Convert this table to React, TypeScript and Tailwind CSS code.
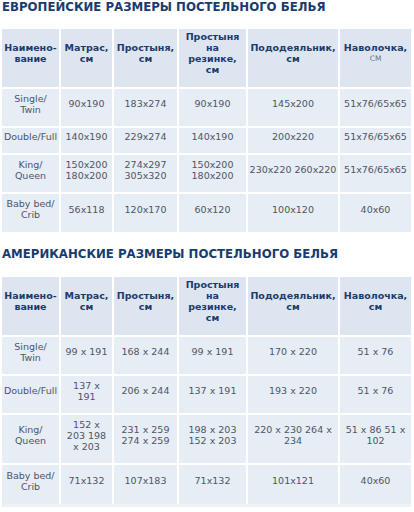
const font = { fontFamily: '"DejaVu Sans", Verdana, sans-serif' };

const headers = [
  ["Наимено-", "вание"],
  ["Матрас,", "см"],
  ["Простыня,", "см"],
  ["Простыня", "на", "резинке,", "см"],
  ["Пододеяльник,", "см"],
];

interface Row {
  h: string;
  cells: string[][];
}

const euRows: Row[] = [
  { h: "h-[37px]", cells: [["Single/", "Twin"], ["90x190"], ["183x274"], ["90x190"], ["145x200"], ["51x76/65x65"]] },
  { h: "h-[25px]", cells: [["Double/Full"], ["140x190"], ["229x274"], ["140x190"], ["200x220"], ["51x76/65x65"]] },
  { h: "h-[37px]", cells: [["King/", "Queen"], ["150x200", "180x200"], ["274x297", "305x320"], ["150x200", "180x200"], ["230x220 260x220"], ["51x76/65x65"]] },
  { h: "h-[38px]", cells: [["Baby bed/", "Crib"], ["56x118"], ["120x170"], ["60x120"], ["100x120"], ["40x60"]] },
];

const usRows: Row[] = [
  { h: "h-[37px]", cells: [["Single/", "Twin"], ["99 x 191"], ["168 x 244"], ["99 x 191"], ["170 x 220"], ["51 x 76"]] },
  { h: "h-[37px]", cells: [["Double/Full"], ["137 x", "191"], ["206 x 244"], ["137 x 191"], ["193 x 220"], ["51 x 76"]] },
  { h: "h-[48px]", cells: [["King/", "Queen"], ["152 x", "203 198", "x 203"], ["231 x 259", "274 x 259"], ["198 x 203", "152 x 203"], ["220 x 230 264 x", "234"], ["51 x 86 51 x", "102"]] },
  { h: "h-[39px]", cells: [["Baby bed/", "Crib"], ["71x132"], ["107x183"], ["71x132"], ["101x121"], ["40x60"]] },
];

function Lines({ lines }: { lines: string[] }) {
  return (
    <div>
      {lines.map((l, i) => (
        <div key={i} className="whitespace-nowrap">{l}</div>
      ))}
    </div>
  );
}

function SizeTable({ rows, smallCm }: { rows: Row[]; smallCm?: boolean }) {
  return (
    <div className="ml-[2px] w-[409px] grid grid-cols-[57px_51px_63px_67px_90px_71px] gap-[2px] text-[9.5px] leading-[11px]">
      {headers.map((h, i) => (
        <div
          key={"h" + i}
          className="h-[58px] bg-[#dce5f0] flex items-center justify-center text-center pb-[10px] font-bold text-[#1c3a6b]"
        >
          <Lines lines={h} />
        </div>
      ))}
      <div className="h-[58px] bg-[#dce5f0] flex items-center justify-center text-center pb-[10px] font-bold text-[#1c3a6b]">
        <div>
          <div>Наволочка,</div>
          {smallCm ? (
            <div className="text-[7.5px] font-normal text-[#6b7588]">СМ</div>
          ) : (
            <div>см</div>
          )}
        </div>
      </div>
      {rows.map((r, ri) =>
        r.cells.map((c, ci) => (
          <div
            key={ri + "-" + ci}
            className={`${r.h} bg-[#e6edf5] flex items-center justify-center text-center pb-[8px] text-[#4d5566]`}
          >
            <Lines lines={c} />
          </div>
        ))
      )}
    </div>
  );
}

export default function App() {
  return (
    <div className="w-[414px] h-[512px] bg-white overflow-hidden" style={font}>
      <h1 className="pl-[2px] text-[11.75px] leading-[14px] font-bold text-[#193b6d] whitespace-nowrap">
        ЕВРОПЕЙСКИЕ РАЗМЕРЫ ПОСТЕЛЬНОГО БЕЛЬЯ
      </h1>
      <div className="mt-[15px]">
        <SizeTable rows={euRows} smallCm />
      </div>

      <h1 className="mt-[15px] pl-[2px] text-[11.75px] leading-[14px] font-bold text-[#193b6d] whitespace-nowrap">
        АМЕРИКАНСКИЕ РАЗМЕРЫ ПОСТЕЛЬНОГО БЕЛЬЯ
      </h1>
      <div className="mt-[16px]">
        <SizeTable rows={usRows} />
        <div className="ml-[2px] w-[409px] h-[3px] bg-[#eef1f5]" />
      </div>
    </div>
  );
}
